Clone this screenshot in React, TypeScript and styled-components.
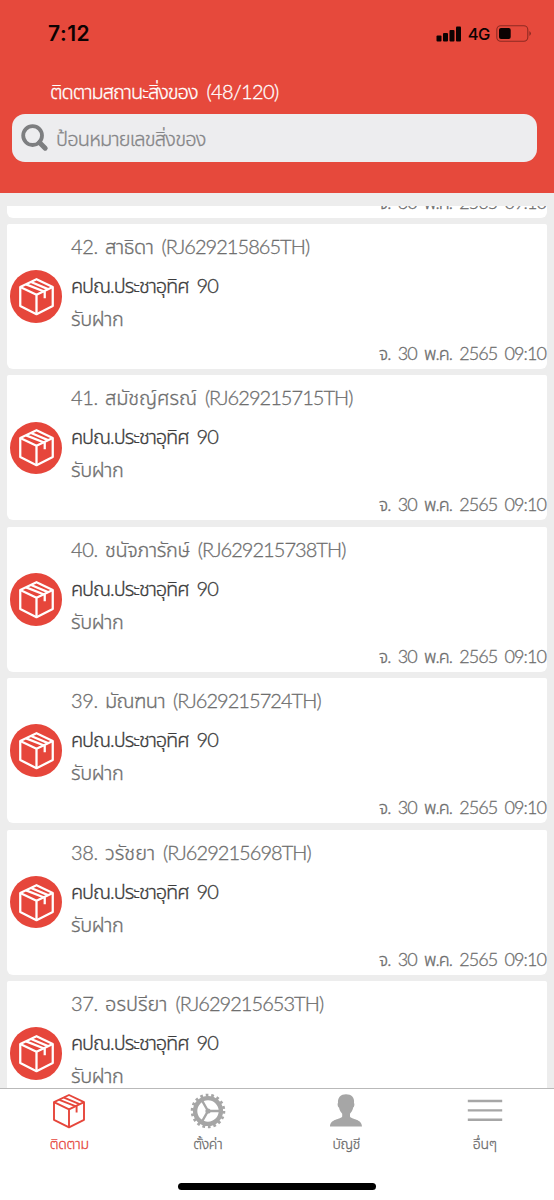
import React from "react";
import styled, { createGlobalStyle } from "styled-components";

const GlobalStyle = createGlobalStyle`
  * { box-sizing: border-box; }
  body { margin: 0; background: #fff; }
`;

const Screen = styled.div`
  width: 554px;
  height: 1200px;
  display: flex;
  flex-direction: column;
  overflow: hidden;
  background: #ededed;
  font-family: Lato, "Noto Sans Thai", "Noto Sans", sans-serif;
  font-weight: 300;
  -webkit-text-stroke-width: 0.3px;
  color: #6e6e6e;
`;

const Header = styled.header`
  flex: none;
  height: 193px;
  background: #e6493c;
  padding: 0 17px 0 12px;
`;

const StatusBar = styled.div`
  height: 67px;
  display: flex;
  align-items: center;
  justify-content: space-between;
  padding: 0 5px 0 36px;
  color: #0c0202;
  font-family: Inter, sans-serif;
  -webkit-text-stroke-width: 0;
`;

const Clock = styled.span`
  font-size: 21px;
  font-weight: 600;
  letter-spacing: 0.55px;
`;

const Indicators = styled.div`
  display: flex;
  align-items: center;
  gap: 6px;
  font-size: 16.5px;
  font-weight: 500;
  letter-spacing: -0.4px;
`;

const Title = styled.h1`
  margin: 0;
  height: 47px;
  display: flex;
  gap: 9px;
  padding-left: 38px;
  font-size: 20px;
  font-weight: 300;
  line-height: 48px;
  color: #fff;
  white-space: nowrap;
`;

const SearchBox = styled.div`
  height: 48px;
  border-radius: 13px;
  background: #ededef;
  display: flex;
  align-items: center;
  gap: 7px;
  padding-left: 9px;
  font-size: 20px;
  line-height: 46px;
  color: #858587;
  white-space: nowrap;
`;

const ListViewport = styled.main`
  flex: 1;
  min-height: 0;
  margin-top: 13px;
  overflow: hidden;
`;

const List = styled.div`
  display: flex;
  flex-direction: column;
  gap: 6.4px;
  padding: 0 7px;
  margin-top: -133.4px;
`;

const Card = styled.article`
  height: 145px;
  flex: none;
  display: flex;
  background: #fff;
  border-radius: 2px 2px 6px 6px;
`;

const IconColumn = styled.div`
  width: 64px;
  display: flex;
  align-items: center;
  padding-left: 2.5px;
`;

const Badge = styled.div`
  width: 52.5px;
  height: 52.5px;
  border-radius: 50%;
  background: #e6463b;
  color: #fff;
  display: flex;
  align-items: center;
  justify-content: center;
  padding-left: 2px;
`;

const Details = styled.div`
  flex: 1;
  display: grid;
  grid-template-rows: 44px 34px 37px 30px;
  white-space: nowrap;
`;

const NameLine = styled.div`
  display: grid;
  grid-template-columns: 34px max-content max-content;
  font-size: 20px;
  line-height: 44px;
`;

const OfficeLine = styled.div`
  display: flex;
  gap: 8px;
  font-size: 20px;
  line-height: 34px;
  color: #3c3c3c;
`;

const StatusLine = styled.div`
  font-size: 20px;
  line-height: 32px;
`;

const DateLine = styled.div`
  padding-right: 1px;
  font-size: 18px;
  line-height: 28px;
  letter-spacing: -0.9px;
  word-spacing: 3.1px;
  text-align: right;
`;

const Piece = styled.span<{ $track: number; $before?: number }>`
  letter-spacing: ${(p) => p.$track}px;
  margin-left: ${(p) => p.$before ?? 0}px;
`;

const TabBar = styled.nav`
  flex: none;
  height: 112px;
  border-top: 1px solid #b9b9b9;
  background: #fff;
  display: flex;
  flex-direction: column;
  align-items: center;
`;

const Tabs = styled.div`
  width: 100%;
  height: 94px;
  display: grid;
  grid-template-columns: repeat(4, 1fr);
`;

const Tab = styled.div<{ $active?: boolean }>`
  display: flex;
  flex-direction: column;
  align-items: center;
  padding-top: 4px;
  color: ${(p) => (p.$active ? "#e6463b" : "#a6a6a6")};
`;

const TabLabel = styled.span<{ $active?: boolean }>`
  margin-top: 3px;
  font-size: 14px;
  letter-spacing: -0.3px;
  line-height: 24px;
  color: ${(p) => (p.$active ? "#e6463b" : "#6c6c6c")};
`;

const HomeIndicator = styled.div`
  width: 198px;
  height: 7px;
  border-radius: 4px;
  background: #000;
`;

const BoxIcon = ({ size, stroke }: { size: number; stroke: number }) => (
  <svg width={size} height={size} viewBox="0 0 36 36" fill="none" stroke="currentColor" strokeWidth={stroke} strokeLinejoin="round">
    <path d="M18 2 L33 9.2 V26.8 L18 34.3 L3 26.8 V9.2 Z" />
    <path d="M3 9.2 L18 16.4 L33 9.2 M18 16.4 V34.3" />
    <path d="M8.4 6.8 L25.6 13.6 V19.6 M13 4.6 L28.6 11.2" />
  </svg>
);

const GearIcon = () => (
  <svg width="36" height="36" viewBox="-18 -18 36 36" fill="none" stroke="currentColor">
    <circle r="12.9" strokeWidth="4.4" />
    <circle r="15.9" strokeWidth="2.8" strokeDasharray="2.7 2.85" />
    <path d="M0 0 H12 M0 0 L-6.2 -10.8 M0 0 L-6.2 10.8" strokeWidth="2.4" />
    <circle r="2.6" fill="currentColor" stroke="none" />
  </svg>
);

const PersonIcon = () => (
  <svg width="36" height="36" viewBox="0 0 36 36" fill="currentColor">
    <path d="M18 1.2 C12.8 1.2 9.6 4.5 10 10 C9.2 10.6 9.8 14.2 11 14.6 C11.5 17.4 13 19.4 14.2 20.8 V23.4 C13.2 26.4 2 25.4 2 33.6 H34 C34 25.4 22.8 26.4 22 23.4 V20.8 C23.2 19.4 24.7 17.4 25.2 14.6 C26.4 14 26.8 10.6 26 10 C26.7 4.5 23.4 1.2 18 1.2 Z" />
  </svg>
);

const MenuIcon = () => (
  <svg width="36" height="36" viewBox="0 0 36 36" stroke="currentColor" strokeWidth="2.4">
    <path d="M0.8 8 H35.2 M0.8 17.4 H35.2 M0.8 26.7 H35.2" />
  </svg>
);

const SearchIcon = () => (
  <svg width="28" height="28" viewBox="0 0 28 28" fill="none" stroke="#7d7e80">
    <circle cx="11.6" cy="11.6" r="9.4" strokeWidth="3.8" />
    <path d="M18.5 18.5 L24.2 24.2" strokeWidth="5" strokeLinecap="round" />
  </svg>
);

const SignalIcon = () => (
  <svg width="26" height="16" viewBox="0 0 26 16" fill="currentColor">
    <rect x="0.5" y="9.5" width="5" height="6" rx="1" />
    <rect x="7" y="7" width="5" height="8.5" rx="1" />
    <rect x="13.5" y="4" width="5" height="11.5" rx="1" />
    <rect x="20" y="0.5" width="5" height="15" rx="1" />
  </svg>
);

const BatteryIcon = () => (
  <svg width="36" height="17" viewBox="0 0 36 17">
    <rect x="0.8" y="0.8" width="31" height="15.4" rx="4" fill="none" stroke="#8d2a22" strokeWidth="1.1" />
    <rect x="3" y="3" width="11.7" height="11" rx="2" fill="currentColor" />
    <path d="M33.4 6 Q36.5 8.5 33.4 11 Z" fill="#8d2a22" />
  </svg>
);

type Parcel = { no: number; name?: string; code?: string; track?: number };

const parcels: Parcel[] = [
  { no: 43 },
  { no: 42, name: "สาธิดา", code: "RJ629215865TH", track: -0.4 },
  { no: 41, name: "สมัชญ์ศรณ์", code: "RJ629215715TH", track: -0.1 },
  { no: 40, name: "ชนัจภารักษ์", code: "RJ629215738TH", track: -0.35 },
  { no: 39, name: "มัณฑนา", code: "RJ629215724TH", track: -0.6 },
  { no: 38, name: "วรัชยา", code: "RJ629215698TH", track: 0 },
  { no: 37, name: "อรปรียา", code: "RJ629215653TH", track: 0 },
];

const ParcelCard = ({ parcel }: { parcel: Parcel }) => (
  <Card>
    <IconColumn>
      <Badge>
        <BoxIcon size={39} stroke={2.1} />
      </Badge>
    </IconColumn>
    <Details>
      <NameLine>
        {parcel.name && (
          <>
            <Piece $track={-0.3}>{parcel.no}.</Piece>
            <Piece $track={parcel.track ?? 0}>{parcel.name}</Piece>
            <Piece $track={-0.95} $before={8}>({parcel.code})</Piece>
          </>
        )}
      </NameLine>
      <OfficeLine>
        <Piece $track={-1.05}>คปณ.ประชาอุทิศ</Piece>
        <Piece $track={-0.9}>90</Piece>
      </OfficeLine>
      <StatusLine>
        <Piece $track={-0.4}>รับฝาก</Piece>
      </StatusLine>
      <DateLine>จ. 30 พ.ค. 2565 09:10</DateLine>
    </Details>
  </Card>
);

export default function App() {
  return (
    <Screen>
      <GlobalStyle />
      <Header>
        <StatusBar>
          <Clock>7:12</Clock>
          <Indicators>
            <SignalIcon />
            4G
            <BatteryIcon />
          </Indicators>
        </StatusBar>
        <Title>
          <Piece $track={-1}>ติดตามสถานะสิ่งของ</Piece>
          <Piece $track={-0.65}>(48/120)</Piece>
        </Title>
        <SearchBox>
          <SearchIcon />
          <Piece $track={-0.8}>ป้อนหมายเลขสิ่งของ</Piece>
        </SearchBox>
      </Header>
      <ListViewport>
        <List>
          {parcels.map((p) => (
            <ParcelCard key={p.no} parcel={p} />
          ))}
        </List>
      </ListViewport>
      <TabBar>
        <Tabs>
          <Tab $active>
            <BoxIcon size={36} stroke={1.9} />
            <TabLabel $active>ติดตาม</TabLabel>
          </Tab>
          <Tab>
            <GearIcon />
            <TabLabel>ตั้งค่า</TabLabel>
          </Tab>
          <Tab>
            <PersonIcon />
            <TabLabel>บัญชี</TabLabel>
          </Tab>
          <Tab>
            <MenuIcon />
            <TabLabel>อื่นๆ</TabLabel>
          </Tab>
        </Tabs>
        <HomeIndicator />
      </TabBar>
    </Screen>
  );
}
